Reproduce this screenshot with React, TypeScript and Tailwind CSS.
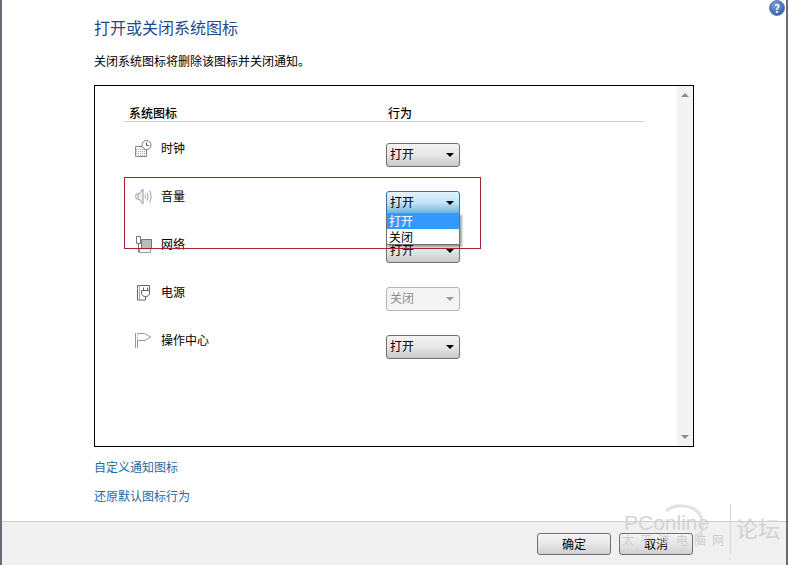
const FONT = "font-['Noto_Sans_CJK_SC','Noto_Sans',sans-serif]"

function ClockIcon() {
  return (
    <svg width="17" height="17" viewBox="0 0 17 17" fill="none" stroke="#8a8a8a" strokeWidth="1">
      <path d="M0.500 6.500h11v10h-11z" fill="#f6f6f6" />
      <path d="M1 9.500h10M1 11.500h10M1 13.500h10M3.500 9v7M5.500 9v7M7.500 9v7M9.500 9v7" stroke="#b0b0b0" strokeDasharray="1 1" />
      <circle cx="11.500" cy="5" r="4.500" fill="#fff" stroke="#777" />
      <path d="M11.500 2.500V5.500H14" stroke="#555" />
    </svg>
  )
}

function SpeakerIcon() {
  return (
    <svg width="17" height="17" viewBox="0 0 17 17" fill="none" stroke="#999" strokeWidth="1">
      <path d="M1.500 5.500c-1 2-1 4 0 6" />
      <path d="M3 5.500h1.500L8 1v15l-3.500-4.500H3z" fill="#efefef" />
      <path d="M10 6.500c.7 1.300.7 2.700 0 4M12 4.500c1.300 2.500 1.300 5.500 0 8M14.500 2.500c2 3.500 2 8.500 0 12" />
    </svg>
  )
}

function NetworkIcon() {
  return (
    <svg width="17" height="17" viewBox="0 0 17 17" fill="none" stroke="#777" strokeWidth="1">
      <path d="M6.500 3.500h10v9h-10z" fill="#bcbcbc" />
      <path d="M4.500 12.500h11v4h-11z" fill="#f6f6f6" stroke="#999" />
      <path d="M1.500 0.500h4v7h-4z" fill="#fff" />
      <path d="M3.500 7.500v9" />
    </svg>
  )
}

function PowerIcon() {
  return (
    <svg width="17" height="17" viewBox="0 0 17 17" fill="none" stroke="#666" strokeWidth="1">
      <path d="M2.500 4.500V1.500h12v9M2.500 4.500v11.500h8" />
      <path d="M4.500 1.500v14.500" stroke="#aaa" />
      <path d="M6.500 6.500h8v3c0 2-2 3-4 3s-4-1-4-3zM8.500 3.500v3M12.500 3.500v3M10.500 12.500v3.500" fill="#fff" />
    </svg>
  )
}

function FlagIcon() {
  return (
    <svg width="17" height="17" viewBox="0 0 17 17" fill="none" stroke="#999" strokeWidth="1">
      <path d="M0.500 1v15M2.500 1v15" />
      <path d="M2.500 1.500h7l6 3.500-5.500 3.500h-7.500" fill="#fff" />
    </svg>
  )
}

function Select({ value, disabled, active }: { value: string; disabled?: boolean; active?: boolean }) {
  let tone = 'border-[#6f6f6f] bg-gradient-to-b from-[#f4f4f4] via-[#e6e6e6] to-[#c9c9c9] text-black'
  if (active) tone = 'border-[#3f6f8f] bg-gradient-to-b from-[#e4f4fc] via-[#bfe3f6] to-[#5fb0dc] text-black'
  if (disabled) tone = 'border-[#b5b5b5] bg-[#f4f4f4] text-[#8a8a8a]'
  return (
    <div className={`flex h-[24px] w-[74px] items-center justify-between rounded-[3px] border pr-[5px] pl-[3px] text-[12px] ${tone}`}>
      <span className="-mt-[2px]">{value}</span>
      <span className={`h-0 w-0 border-x-[4px] border-t-[4px] border-x-transparent ${disabled ? 'border-t-[#999]' : 'border-t-black'}`} />
    </div>
  )
}

const ROWS = [
  { label: '时钟', icon: <ClockIcon />, value: '打开' },
  { label: '音量', icon: <SpeakerIcon />, value: '打开', active: true },
  { label: '网络', icon: <NetworkIcon />, value: '打开' },
  { label: '电源', icon: <PowerIcon />, value: '关闭', disabled: true },
  { label: '操作中心', icon: <FlagIcon />, value: '打开' },
]

export default function App() {
  return (
    <div className={`${FONT} relative flex h-[565px] w-[788px] flex-col overflow-hidden border-r-2 border-l-2 border-r-[#6b6b78] border-l-[#6b6b78] bg-white text-black`}>
      <div className="flex flex-1 flex-col pr-[92px] pl-[92px]">
        <h1 className="mt-[16px] h-[22px] text-[16px] leading-[22px] font-normal text-[#1e4a8a]">打开或关闭系统图标</h1>
        <p className="mt-[14px] h-[18px] text-[12px] leading-[18px]">关闭系统图标将删除该图标并关闭通知。</p>
        <div className="mt-[15px] flex h-[362px] border border-black">
          <div className="flex-1 pr-[33px] pl-[29px]">
            <div className="mt-[19px] flex h-[17px] border-b border-[#cfcfcf] pl-[5px] text-[12px] leading-[15px] font-medium">
              <div className="w-[259px]">系统图标</div>
              <div>行为</div>
            </div>
            <div className="mt-[21px] flex flex-col gap-[24px]">
              {ROWS.map((row) => (
                <div key={row.label} className="flex h-[24px]">
                  <div className="flex w-[262px] items-start pl-[11px]">
                    <div className="-mt-[3px] w-[26px]">{row.icon}</div>
                    <span className="-mt-[4px] text-[12px] leading-[18px]">{row.label}</span>
                  </div>
                  <Select value={row.value} disabled={row.disabled} active={row.active} />
                </div>
              ))}
            </div>
          </div>
          <div className="flex w-[16px] flex-col items-center justify-between bg-[#f3f3f3] py-[7px]">
            <span className="h-0 w-0 border-x-[4px] border-b-[4px] border-x-transparent border-b-[#8c8c8c]" />
            <span className="h-0 w-0 border-x-[4px] border-t-[4px] border-x-transparent border-t-[#8c8c8c]" />
          </div>
        </div>
        <a className="mt-[11px] h-[18px] text-[12px] leading-[18px] text-[#1d6aa5]">自定义通知图标</a>
        <a className="mt-[11px] h-[18px] text-[12px] leading-[18px] text-[#1d6aa5]">还原默认图标行为</a>
      </div>
      <div className="flex h-[44px] justify-end gap-[8px] border-t border-[#d0d0d0] bg-[#f0f0f0] pt-[11px] pr-[93px]">
        <button className="h-[22px] w-[74px] rounded-[3px] border border-[#707070] bg-gradient-to-b from-[#f4f4f4] via-[#e6e6e6] to-[#cfcfcf] text-[12px] leading-[18px]">确定</button>
        <button className="h-[22px] w-[74px] rounded-[3px] border border-[#707070] bg-gradient-to-b from-[#f4f4f4] via-[#e6e6e6] to-[#cfcfcf] text-[12px] leading-[18px]">取消</button>
      </div>

      {/* help button */}
      <div className="absolute top-0 left-[767px] flex h-[16px] w-[16px] items-center justify-center rounded-full border border-[#5f7fa8] bg-[radial-gradient(circle_at_40%_30%,#7fa5dc,#1f4f9c)] text-[11px] leading-none font-bold text-white">?</div>

      {/* open dropdown list */}
      <div className="absolute top-[213px] left-[384px] w-[74px] border-x border-b border-[#6f6f6f] bg-white text-[12px] leading-[16px] shadow-[2px_2px_2px_rgba(0,0,0,0.35)]">
        <div className="h-[16px] bg-[#3399ff] pl-[2px] text-white">打开</div>
        <div className="h-[15px] pl-[2px] leading-[15px]">关闭</div>
      </div>

      {/* red annotation */}
      <div className="absolute top-[177px] left-[122px] h-[72px] w-[357px] border border-[#a8232e]" />

      {/* watermark */}
      <svg className="pointer-events-none absolute top-[503px] left-[660px]" width="44" height="44" viewBox="0 0 44 44" fill="none" stroke="#e2e2e2" strokeWidth="3">
        <path d="M4 8C12 1 28 1 36 9c6 7 6 18 0 26" />
      </svg>
      <div className="pointer-events-none absolute top-[511px] left-[620px]">
        <div className="pl-[2px] font-['Liberation_Sans',sans-serif] text-[21px] leading-[24px] text-[#d4d4d4]">PConline</div>
        <div className="-mt-[2px] text-[12px] leading-[14px] tracking-[6px] text-[#cfcfcf]">太平洋电脑网</div>
      </div>
      <div className="pointer-events-none absolute top-[504px] left-[728px] h-[50px] w-px bg-[#d6d6d6]" />
      <div className="pointer-events-none absolute top-[513px] left-[734px] text-[22px] leading-[28px] text-[#d2d2d2]">论坛</div>
    </div>
  )
}
